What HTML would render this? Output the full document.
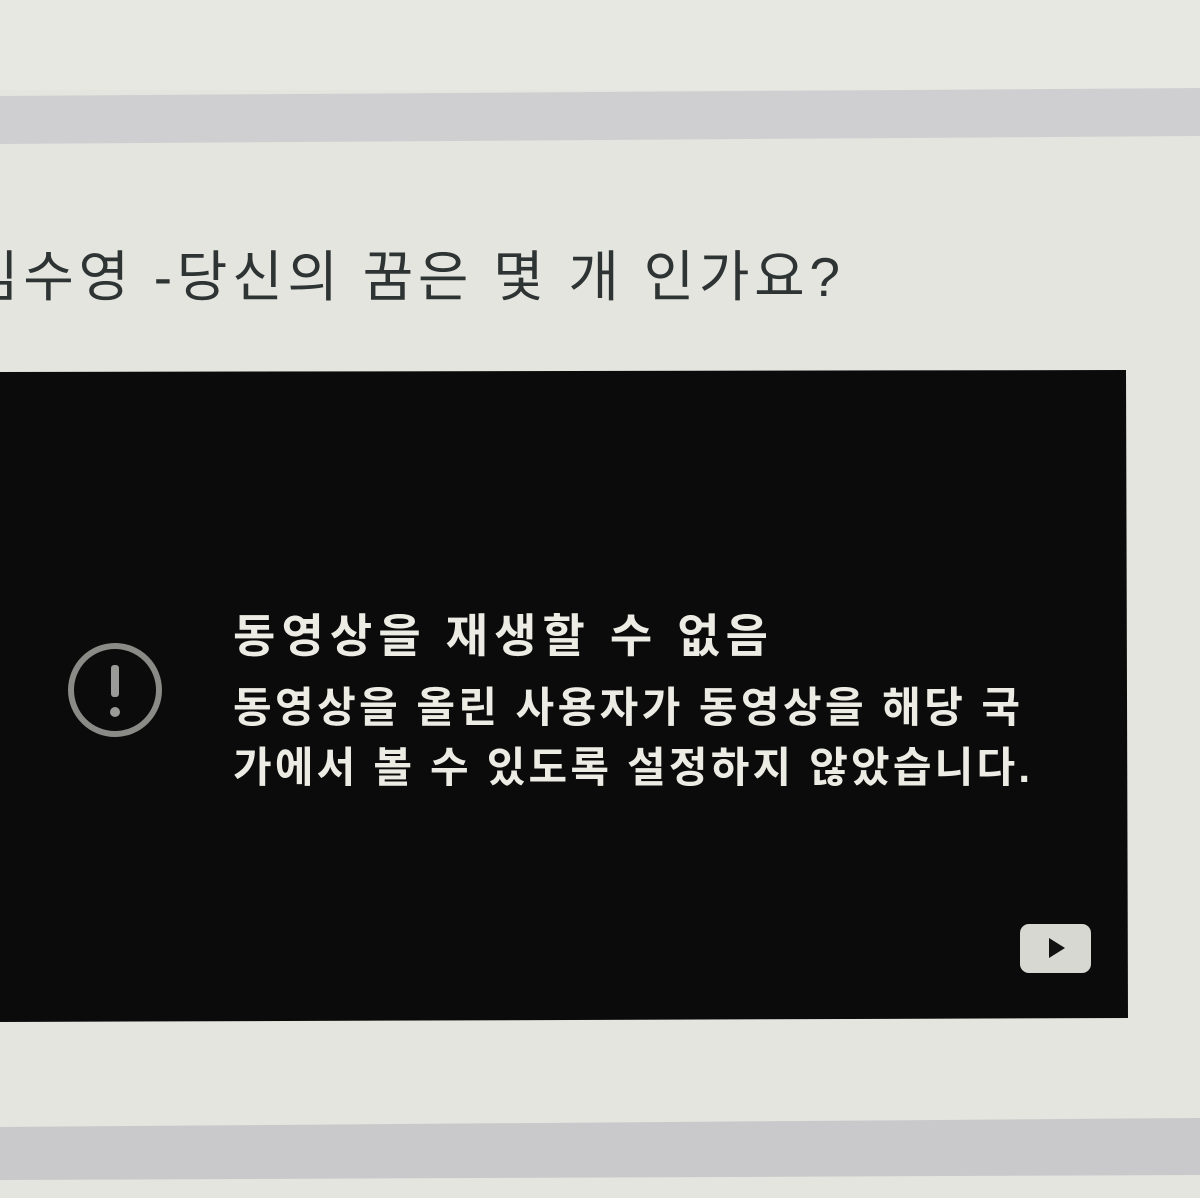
<!DOCTYPE html>
<html><head><meta charset="utf-8"><style>
html,body{margin:0;padding:0;}
body{width:1200px;height:1198px;background:#e4e5df;overflow:hidden;position:relative;}
</style></head><body>
<svg width="1200" height="1198" viewBox="0 0 1200 1198" xmlns="http://www.w3.org/2000/svg" style="position:absolute;left:0;top:0">
<rect x="0" y="0" width="1200" height="1198" fill="#e4e5df"/>
<rect x="0" y="0" width="1200" height="90" fill="#e7e8e2"/>
<polygon points="0,96 1200,88 1200,136 0,144" fill="#cfcfd1"/>
<polygon points="0,1127 1200,1118 1200,1175 0,1180" fill="#c9c9cb"/>
<text x="-32" y="296" font-family="'Liberation Sans','Noto Sans CJK KR',sans-serif" font-size="55" fill="#2e3333" textLength="872" lengthAdjust="spacing">김수영 -당신의 꿈은 몇 개 인가요?</text>
<polygon points="0,372 1126,370 1128,1018 0,1022" fill="#0b0b0b"/>
<circle cx="115" cy="690" r="44" fill="none" stroke="#8a8a86" stroke-width="6"/>
<rect x="111" y="665" width="8" height="32" rx="3" fill="#9a9a96"/>
<circle cx="115" cy="712" r="5" fill="#9a9a96"/>
<g font-family="'Liberation Sans','Noto Sans CJK KR',sans-serif" fill="#ecece4" font-weight="bold">
<text x="233" y="652" font-size="46" textLength="535" lengthAdjust="spacing">동영상을 재생할 수 없음</text>
<text x="233" y="722" font-size="42" textLength="787" lengthAdjust="spacing">동영상을 올린 사용자가 동영상을 해당 국</text>
<text x="233" y="782" font-size="42" textLength="797" lengthAdjust="spacing">가에서 볼 수 있도록 설정하지 않았습니다.</text>
</g>
<rect x="1020" y="924" width="71" height="49" rx="9" fill="#d8d8d2"/>
<polygon points="1049,938 1049,958 1065,948" fill="#111"/>
</svg>
</body></html>
